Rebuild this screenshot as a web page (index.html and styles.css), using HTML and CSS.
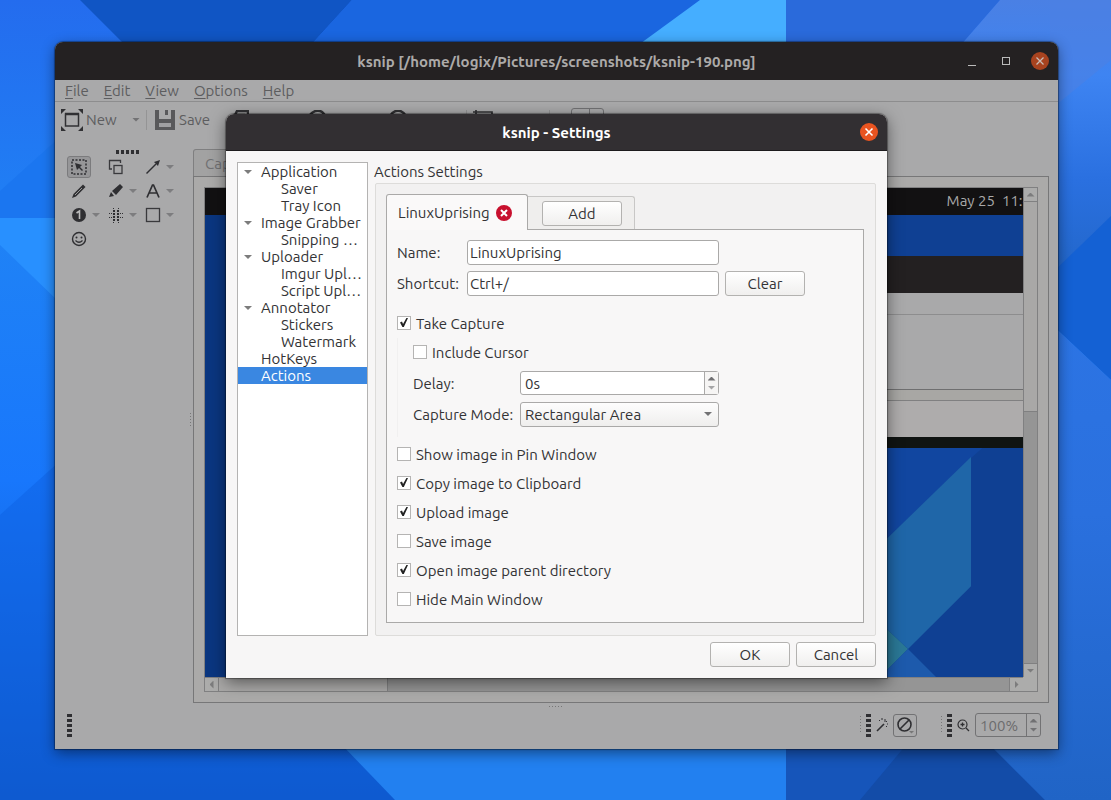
FILE: index.html
```html
<!DOCTYPE html>
<html lang="en">
<head>
    <meta charset="UTF-8">
    <meta name="viewport" content="width=device-width, initial-scale=1.0">
    <title>ksnip - Settings</title>
    <link rel="stylesheet" href="styles.css">
</head>
<body>

    <svg class="wallpaper" viewBox="0 0 1111 800" preserveAspectRatio="none" aria-hidden="true">
        <defs>
            <linearGradient id="left" x1="0" y1="0" x2="0" y2="1">
                <stop offset="0" stop-color="#246cee"/>
                <stop offset="0.3" stop-color="#1f82f6"/>
                <stop offset="0.6" stop-color="#1877fc"/>
                <stop offset="1" stop-color="#0e52bc"/>
            </linearGradient>
            <linearGradient id="right" x1="0" y1="0" x2="0" y2="1">
                <stop offset="0" stop-color="#4a80e4"/>
                <stop offset="0.25" stop-color="#3e84f2"/>
                <stop offset="0.6" stop-color="#2a70e0"/>
                <stop offset="1" stop-color="#2064c4"/>
            </linearGradient>
            <linearGradient id="right-low" x1="0" y1="0" x2="0" y2="1">
                <stop offset="0" stop-color="#2c74e4"/>
                <stop offset="0.4" stop-color="#2a70de"/>
                <stop offset="1" stop-color="#2064c6"/>
            </linearGradient>
        </defs>
        <rect width="1111" height="800" fill="url(#left)"/>
        <path d="M0 515L60 461H400V800H0z" fill="#0e62e4" fill-opacity=".5"/>
        <path d="M0 191L60 137V218H0z" fill="#1b76f0"/>
        <path d="M0 218H60V303L0 245z" fill="#2890ff"/>
        <path d="M80 0H352L310 46H126z" fill="#1055c4"/>
        <path d="M352 0H700L640 46H310z" fill="#1a66e0"/>
        <path d="M700 0H786V46H637z" fill="#45aeff"/>
        <path d="M786 0H1000L960 46H786z" fill="#2a6adb"/>
        <path d="M1000 0H1111V300H1040V46H960z" fill="url(#right)"/>
        <path d="M1111 60L1050 110V0H1111z" fill="#4c80e2" fill-opacity=".6"/>
        <path d="M1050 275L1111 216V380L1050 323z" fill="#1461d4"/>
        <path d="M342 745H786V800H395z" fill="#2280f0"/>
        <path d="M786 745H990L1045 800H786z" fill="#1655ba"/>
        <path d="M906 745H990L1045 800H860z" fill="#134ca8"/>
        <path d="M1050 323L1111 380V800H1045L990 745H1050z" fill="url(#right-low)"/>
    </svg>

    <div class="window">
        <header class="titlebar">
            <h1>ksnip [/home/logix/Pictures/screenshots/ksnip-190.png]</h1>
            <div class="window-buttons">
                <button class="wbtn" aria-label="Minimize"><svg width="10" height="10"><path d="M1 9.500h8" stroke="#bbb" stroke-width="1"/></svg></button>
                <button class="wbtn" aria-label="Maximize"><svg width="10" height="10"><rect x="1.500" y="1.500" width="7" height="7" fill="none" stroke="#bbb"/></svg></button>
                <button class="wbtn close" aria-label="Close window"><svg width="10" height="10"><path d="M1.500 1.500l7 7m0-7l-7 7" stroke="#c9bdb8" stroke-width="1.300"/></svg></button>
            </div>
        </header>

        <nav class="menubar">
            <a href="#"><u>F</u>ile</a>
            <a href="#"><u>E</u>dit</a>
            <a href="#"><u>V</u>iew</a>
            <a href="#"><u>O</u>ptions</a>
            <a href="#"><u>H</u>elp</a>
        </nav>

        <div class="toolbar">
            <button class="tool-new">
                <svg width="22" height="22"><rect x="4.500" y="5" width="13" height="12" fill="none" stroke="#303033" stroke-width="1.500"/><path d="M4 5h14" stroke="#303033" stroke-width="2.500"/><path d="M0 0h5L0 5zM22 0h-5l5 5zM0 22h5l-5-5zM22 22h-5l5-5z" fill="#303033"/></svg>
                New
            </button>
            <i class="arrow"></i>
            <i class="sep"></i>
            <button class="tool-save">
                <svg width="20" height="20"><path d="M0 0h4v9h12V0h4v20H0z" fill="#59595b"/><path d="M10 0h3v5h-3z" fill="#59595b"/><path d="M4 13h12v4H4z" fill="#a0a0a2"/></svg>
                Save
            </button>
            <button class="tool-icon" aria-label="Copy"><svg width="20" height="20"><path d="M6 5l2-4h11v14h-5M1 19V8l4-3h10v14z" fill="none" stroke="#303033" stroke-width="2.500"/></svg></button>
            <button class="tool-icon" aria-label="Undo"><svg width="20" height="20"><path d="M1 6C6-1 14-1 17 6v8" fill="none" stroke="#303033" stroke-width="2.500"/></svg></button>
            <button class="tool-icon" aria-label="Redo"><svg width="20" height="20"><path d="M19 6C15-1 7-1 3 6v8" fill="none" stroke="#303033" stroke-width="2.500"/></svg></button>
            <i class="sep"></i>
            <button class="tool-crop" aria-label="Crop"><svg width="20" height="20"><path d="M3 0v16h16M0 2h19v18" fill="none" stroke="#303033" stroke-width="1.700"/></svg></button>
            <i class="sep"></i>
            <i class="dot"></i>
            <i class="mini-spin"></i>
        </div>

        <div class="workspace">
            <aside class="tools">
                <i class="handle-h"></i>
                <div class="tool-grid">
                    <div class="tool"><button class="active" aria-label="Select"><svg width="16" height="16"><rect x="1" y="1" width="14" height="14" fill="none" stroke="#2f2f32" stroke-width="1.500" stroke-dasharray="2 1.500"/><path d="M4 4l7 2-2 2 3 3-1 1-3-3-2 2z" fill="#2f2f32"/></svg></button></div>
                    <div class="tool"><button aria-label="Duplicate"><svg width="16" height="16"><path d="M4 10H1.500V1.500h11V4" fill="none" stroke="#39393c" stroke-width="1.300"/><rect x="6" y="6.500" width="8" height="8" fill="none" stroke="#39393c" stroke-width="1.300"/></svg></button></div>
                    <div class="tool"><button aria-label="Arrow"><svg width="16" height="16"><path d="M1.500 14.500L11 5" stroke="#2f2f32" stroke-width="1.500"/><path d="M15 1l-2 6-4-4z" fill="#2f2f32"/></svg></button><i class="arrow"></i></div>
                    <div class="tool"><button aria-label="Pen"><svg width="16" height="16"><path d="M1 15l1.500-4L12 1.500l2.500 2.500L5 13.500z" fill="#2f2f32"/><path d="M4 12l7-7" stroke="#999" stroke-width="1"/></svg></button></div>
                    <div class="tool"><button aria-label="Marker"><svg width="16" height="16"><path d="M1 14l2-5 3 4zM4 8l8-7 3 3-7 8z" fill="#2f2f32"/></svg></button><i class="arrow"></i></div>
                    <div class="tool"><button aria-label="Text"><svg width="16" height="16"><path d="M2 14.500L7.500 2h1L14 14.500M4 10h8" fill="none" stroke="#2f2f32" stroke-width="1.700"/></svg></button><i class="arrow"></i></div>
                    <div class="tool"><button aria-label="Number"><svg width="16" height="16"><circle cx="8" cy="8" r="7" fill="#2f2f32"/><path d="M5.500 6L8.500 4v8" fill="none" stroke="#bbb" stroke-width="1.600"/></svg></button><i class="arrow"></i></div>
                    <div class="tool"><button aria-label="Blur"><svg width="16" height="16"><g fill="#2f2f32"><rect x="5" y="1" width="1" height="1"/><rect x="10" y="1" width="1" height="1"/><rect x="5" y="3" width="2" height="2"/><rect x="9" y="3" width="2" height="2"/><rect x="1" y="6" width="1" height="1"/><rect x="3" y="6" width="1" height="1"/><rect x="5" y="6" width="2" height="2"/><rect x="9" y="6" width="2" height="2"/><rect x="12" y="6" width="1" height="1"/><rect x="14" y="6" width="1" height="1"/><rect x="1" y="10" width="1" height="1"/><rect x="3" y="10" width="1" height="1"/><rect x="5" y="9" width="2" height="2"/><rect x="9" y="9" width="2" height="2"/><rect x="12" y="10" width="1" height="1"/><rect x="14" y="10" width="1" height="1"/><rect x="5" y="12" width="2" height="2"/><rect x="9" y="12" width="2" height="2"/><rect x="5" y="15" width="1" height="1"/><rect x="10" y="15" width="1" height="1"/></g></svg></button><i class="arrow"></i></div>
                    <div class="tool"><button aria-label="Rectangle"><svg width="16" height="16"><rect x="1.500" y="1.500" width="13" height="13" fill="none" stroke="#39393c" stroke-width="1.300"/></svg></button><i class="arrow"></i></div>
                    <div class="tool"><button aria-label="Sticker"><svg width="16" height="16"><circle cx="8" cy="8" r="6.500" fill="none" stroke="#2f2f32" stroke-width="1.400"/><circle cx="5.500" cy="6.500" r="1" fill="#2f2f32"/><circle cx="10.500" cy="6.500" r="1" fill="#2f2f32"/><path d="M4.500 9.500q3.500 3.500 7 0" fill="none" stroke="#2f2f32" stroke-width="1.200"/></svg></button></div>
                </div>
            </aside>
            <i class="splitter"></i>

            <main class="editor">
                <div class="editor-tab">Cap</div>
                <div class="page">
                    <div class="canvas">
                        <div class="shot">
                            <svg class="shot-bg" viewBox="0 0 818 491" preserveAspectRatio="none" aria-hidden="true">
                                <rect width="818" height="491" fill="#0f4093"/>
                                <path d="M0 0H30V491H0z" fill="#0a3680"/>
                                <path d="M766 271L682 352V250H790z" fill="#1146a0"/>
                                <path d="M766 270V400L703 463L682 443V352z" fill="#1f66a8"/>
                                <path d="M682 443L703 463L682 484z" fill="#2a7896"/>
                                <path d="M703 463L731 491H682V484z" fill="#1d5aac"/>
                            </svg>
                            <div class="shot-bar"><span>May 25</span><span>11:4</span></div>
                            <div class="shot-window">
                                <div class="shot-title"></div>
                                <div class="shot-menu"></div>
                                <div class="shot-body"></div>
                                <div class="shot-gap"></div>
                                <div class="shot-page"></div>
                                <div class="shot-strip"></div>
                            </div>
                        </div>
                        <div class="vscroll">
                            <span class="sbtn"><i class="tri up"></i></span>
                            <span class="thumb"></span>
                            <span class="sbtn"><i class="tri down"></i></span>
                        </div>
                        <div class="hscroll">
                            <span class="sbtn"><i class="tri left"></i></span>
                            <span class="thumb"></span>
                            <span class="sbtn"><i class="tri right"></i></span>
                        </div>
                        <div class="corner"></div>
                    </div>
                </div>
            </main>
        </div>

        <footer class="bottombar">
            <i class="handle-v"></i>
            <div class="bottom-group">
                <i class="dots"></i>
                <i class="handle-v"></i>
                <svg width="12" height="14"><path d="M1 13L8 6" stroke="#2f2f32" stroke-width="1.600"/><path d="M9 1v3M11 6h1M3 2l1 1M6 0v2M11 3l-1 1M10 8l1 1" stroke="#2f2f32"/></svg>
                <button class="effect" aria-label="Effect"><svg width="18" height="18"><circle cx="8.500" cy="8.500" r="6.500" fill="none" stroke="#2f2f32" stroke-width="1.600"/><path d="M4 13l9-9" stroke="#2f2f32" stroke-width="1.600"/><path d="M13 15h5l-2.500 2.500z" fill="#777"/></svg></button>
            </div>
            <div class="bottom-group">
                <i class="dots"></i>
                <i class="handle-v"></i>
                <svg width="13" height="13"><circle cx="5.500" cy="5.500" r="4.500" fill="none" stroke="#2f2f32" stroke-width="1.200"/><path d="M9 9l3 3M3.500 5.500h4M5.500 3.500v4" stroke="#2f2f32" stroke-width="1.300"/></svg>
                <div class="spin zoom">
                    <input type="text" value="100%" aria-label="Zoom">
                    <span class="spin-arrows"><i class="tri up"></i><i class="tri down"></i></span>
                </div>
            </div>
        </footer>
    </div>

    <div class="dialog" role="dialog" aria-labelledby="dialog-title">
        <header class="titlebar">
            <h2 id="dialog-title">ksnip - Settings</h2>
            <div class="window-buttons">
                <button class="wbtn close" aria-label="Close settings"><svg width="10" height="10"><path d="M1.500 1.500l7 7m0-7l-7 7" stroke="#fff" stroke-width="1.600"/></svg></button>
            </div>
        </header>

        <div class="dialog-body">
            <ul class="tree">
                <li class="open">Application
                    <ul>
                        <li>Saver</li>
                        <li>Tray Icon</li>
                    </ul>
                </li>
                <li class="open">Image Grabber
                    <ul>
                        <li>Snipping …</li>
                    </ul>
                </li>
                <li class="open">Uploader
                    <ul>
                        <li>Imgur Upl…</li>
                        <li>Script Upl…</li>
                    </ul>
                </li>
                <li class="open">Annotator
                    <ul>
                        <li>Stickers</li>
                        <li>Watermark</li>
                    </ul>
                </li>
                <li>HotKeys</li>
                <li class="selected">Actions</li>
            </ul>

            <section class="settings">
                <h3>Actions Settings</h3>
                <div class="group">
                    <div class="tabs">
                        <div class="tab current">
                            LinuxUprising
                            <button class="tab-close" aria-label="Remove action"><svg width="16" height="16"><circle cx="8" cy="8" r="8" fill="#c8102e"/><path d="M5 5l6 6m0-6l-6 6" stroke="#fff" stroke-width="2"/></svg></button>
                        </div>
                        <div class="tab">
                            <button class="btn">Add</button>
                        </div>
                    </div>
                    <form class="pane">
                        <div class="fields">
                            <label for="name">Name:</label>
                            <input class="text" type="text" id="name" value="LinuxUprising">
                            <label class="next" for="shortcut">Shortcut:</label>
                            <input class="text" type="text" id="shortcut" value="Ctrl+/">
                            <button type="button" class="btn">Clear</button>
                        </div>

                        <label class="check"><input type="checkbox" checked>Take Capture</label>
                        <div class="sub">
                            <label class="check"><input type="checkbox">Include Cursor</label>
                            <div class="sub-fields">
                                <label for="delay">Delay:</label>
                                <div class="spin">
                                    <input type="text" id="delay" value="0s">
                                    <span class="spin-arrows"><i class="tri up"></i><i class="tri down"></i></span>
                                </div>
                                <label for="mode">Capture Mode:</label>
                                <div class="combo">
                                    <select id="mode"><option>Rectangular Area</option></select>
                                    <i class="arrow"></i>
                                </div>
                            </div>
                        </div>
                        <label class="check"><input type="checkbox">Show image in Pin Window</label>
                        <label class="check"><input type="checkbox" checked>Copy image to Clipboard</label>
                        <label class="check"><input type="checkbox" checked>Upload image</label>
                        <label class="check"><input type="checkbox">Save image</label>
                        <label class="check"><input type="checkbox" checked>Open image parent directory</label>
                        <label class="check"><input type="checkbox">Hide Main Window</label>
                    </form>
                </div>
            </section>
        </div>

        <div class="dialog-buttons">
            <button class="btn">OK</button>
            <button class="btn">Cancel</button>
        </div>
    </div>

</body>
</html>
```
FILE: styles.css
```css
* {
    box-sizing: border-box;
}
body {
    margin: 0;
    height: 100vh;
    position: relative;
    overflow: hidden;
    font-family: Ubuntu, "Noto Sans", sans-serif;
    font-size: 15px;
    line-height: 17px;
    color: #333335;
}
button, input, select {
    font: inherit;
    color: inherit;
    margin: 0;
    padding: 0;
    border: none;
    background: none;
}
h1, h2, h3 {
    margin: 0;
    font-size: 15px;
}
svg {
    display: block;
    flex: none;
}
i {
    display: block;
    flex: none;
}
.wallpaper {
    position: absolute;
    width: 100%;
    height: 100%;
}

/* small triangles */
.arrow {
    width: 8px;
    height: 4px;
    background: #727274;
    clip-path: polygon(0 0, 100% 0, 50% 100%);
}
.tri {
    width: 8px;
    height: 4px;
    background: #707072;
}
.tri.up {
    clip-path: polygon(50% 0, 100% 100%, 0 100%);
}
.tri.down {
    clip-path: polygon(0 0, 100% 0, 50% 100%);
}
.tri.left, .tri.right {
    width: 4px;
    height: 8px;
}
.tri.left {
    clip-path: polygon(100% 0, 100% 100%, 0 50%);
}
.tri.right {
    clip-path: polygon(0 0, 100% 50%, 0 100%);
}

/* main window */
.window {
    position: absolute;
    top: 42px;
    right: 53px;
    bottom: 51px;
    left: 55px;
    display: flex;
    flex-direction: column;
    background: #a9a9aa;
    border-radius: 8px 8px 0 0;
    box-shadow: 0 0 1px 1px rgba(0,0,0,0.35), 0 4px 14px rgba(0,0,0,0.45);
    color: #5d5d5f;
}
.titlebar {
    position: relative;
    display: flex;
    align-items: center;
    justify-content: center;
    height: 38px;
    background: #242122;
    border-radius: 8px 8px 0 0;
    color: #acaaa9;
}
.window-buttons {
    position: absolute;
    right: 9px;
    display: flex;
    gap: 16px;
}
.wbtn {
    display: flex;
    align-items: center;
    justify-content: center;
    width: 18px;
    height: 18px;
    border-radius: 50%;
}
.wbtn.close {
    background: #a8431f;
}
.menubar {
    display: flex;
    gap: 15px;
    height: 22px;
    padding: 2px 10px;
    border-bottom: 1px solid #8d8d8e;
}
.menubar a {
    color: inherit;
    text-decoration: none;
}
.menubar u {
    text-underline-offset: 2px;
}
.toolbar {
    display: flex;
    align-items: center;
    height: 35px;
    padding-left: 6px;
}
.toolbar button {
    display: flex;
    align-items: center;
    gap: 4px;
}
.toolbar .tool-new {
    width: 71px;
    gap: 3px;
}
.toolbar .tool-save {
    width: 74px;
    margin-left: 8px;
}
.toolbar .tool-icon {
    width: 79px;
}
.sep {
    width: 1px;
    height: 20px;
    margin-left: 6px;
    background: #949495;
}
.tool-icon + .sep {
    margin-left: 0;
}
.tool-crop {
    width: 70px;
    margin-left: 6px;
}
.dot {
    width: 7px;
    height: 12px;
    margin-left: 6px;
    border-radius: 50%;
    background: #303033;
}
.mini-spin {
    width: 33px;
    height: 24px;
    margin-left: 8px;
    border: 1px solid #727274;
    border-radius: 3px;
    background: linear-gradient(90deg, transparent 17px, #727274 17px 18px, transparent 18px);
}
.workspace {
    flex: 1;
    display: flex;
    min-height: 0;
}
.tools {
    width: 135px;
    padding: 13px 0 0 12px;
}
.handle-h {
    width: 23px;
    height: 4px;
    margin-left: 49px;
    background: repeating-linear-gradient(90deg, #2f2f32 0 3px, transparent 3px 5px);
}
.tool-grid {
    display: grid;
    grid-template-columns: repeat(3, 37px);
    grid-auto-rows: 24px;
    margin-top: 1px;
}
.tool {
    display: flex;
    align-items: center;
    gap: 1px;
}
.tool .arrow {
    background: #7d7d7f;
}
.tool button {
    display: flex;
    align-items: center;
    justify-content: center;
    width: 24px;
    height: 22px;
}
.tool .active {
    border: 1px solid #7b7b7d;
    border-radius: 3px;
    background: #969698;
}
.splitter {
    align-self: center;
    width: 1px;
    height: 15px;
    margin-right: 2px;
    background: repeating-linear-gradient(#777 0 1px, transparent 1px 3px);
}
.editor {
    flex: 1;
    display: flex;
    flex-direction: column;
    min-width: 0;
    padding: 12px 9px 0 0;
}
.editor-tab {
    width: 120px;
    height: 27px;
    padding: 5px 11px;
    border: 1px solid #7f7f80;
    border-bottom: none;
    border-radius: 3px 3px 0 0;
    background: #a2a2a2;
    color: #717173;
}
.page {
    flex: 1;
    display: flex;
    min-height: 0;
    padding: 10px;
    border: 1px solid #777778;
    background: #abaaa9;
}
.canvas {
    flex: 1;
    display: grid;
    grid-template: 1fr 14px / 1fr 14px;
    min-width: 0;
    border: 1px solid #808081;
}
.shot {
    position: relative;
    display: flex;
    flex-direction: column;
    min-width: 0;
    overflow: hidden;
}
.shot-bg {
    position: absolute;
    width: 100%;
    height: 100%;
}
.shot-bar {
    position: relative;
    display: flex;
    justify-content: flex-end;
    gap: 7px;
    height: 27px;
    padding: 4px 0;
    margin-right: -8px;
    background: #121112;
    color: #a9a9a9;
}
.shot-window {
    position: relative;
    margin: 41px 0 0 60px;
}
.shot-title {
    height: 37px;
    background: #232021;
}
.shot-menu {
    height: 22px;
    background: #a9a9aa;
    border-bottom: 1px solid #8d8d8e;
}
.shot-body {
    height: 75px;
    background: #a9a9aa;
    border-bottom: 1px solid #6f6f70;
}
.shot-gap {
    height: 11px;
    background: #a8a7a4;
    border-bottom: 1px solid #808081;
}
.shot-page {
    height: 36px;
    background: #aeacac;
}
.shot-strip {
    height: 11px;
    background: #101412;
}
.vscroll, .hscroll {
    display: flex;
    background: #959595;
}
.vscroll {
    flex-direction: column;
    justify-content: space-between;
    border-left: 1px solid #808081;
}
.hscroll {
    justify-content: space-between;
    border-top: 1px solid #808081;
}
.sbtn {
    display: flex;
    align-items: center;
    justify-content: center;
    flex: none;
    background: #acacab;
}
.vscroll .sbtn {
    height: 13px;
}
.hscroll .sbtn {
    width: 13px;
}
.thumb {
    background: #a9a8a7;
    border: 0 solid #808081;
}
.vscroll .thumb {
    height: 211px;
    border-width: 1px 0;
    margin-bottom: auto;
}
.hscroll .thumb {
    width: 170px;
    border-width: 0 1px;
    margin-right: auto;
}
.sbtn:last-child {
    outline: 1px solid #808081;
}
.sbtn .tri {
    background: #7c7c7d;
}
.corner {
    background: #acacab;
}
.bottombar {
    display: flex;
    align-items: center;
    gap: 24px;
    height: 46px;
    padding: 0 17px 2px 12px;
    background: repeating-linear-gradient(90deg, #777 0 1px, transparent 1px 3px) center 3px / 15px 1px no-repeat;
}
.bottombar > .handle-v {
    margin-right: auto;
}
.bottom-group {
    display: flex;
    align-items: center;
    gap: 5px;
}
.handle-v {
    width: 5px;
    height: 23px;
    background: repeating-linear-gradient(#2f2f32 0 3px, transparent 3px 5px);
}
.dots {
    width: 1px;
    height: 18px;
    background: repeating-linear-gradient(#777 0 1px, transparent 1px 3px);
}
.effect {
    display: flex;
    align-items: center;
    justify-content: center;
    width: 24px;
    height: 23px;
    border: 1px solid #727274;
    border-radius: 3px;
}

/* spin boxes */
.spin {
    display: flex;
    height: 24px;
    border: 1px solid #aaa9a8;
    border-radius: 3px;
    background: #fff;
}
.spin input {
    flex: 1;
    min-width: 0;
    padding: 1px 0 0 4px;
}
.spin-arrows {
    display: flex;
    flex-direction: column;
    align-items: center;
    justify-content: center;
    gap: 5px;
    width: 14px;
    border-left: 1px solid #aaa9a8;
    background: #f6f5f4;
}
.spin-arrows .down {
    background: #a5a5a6;
}
.zoom {
    width: 66px;
    background: none;
    border-color: #727274;
    color: #6c6c6e;
}
.zoom .spin-arrows {
    background: none;
    border-color: #727274;
}
.zoom .down {
    background: #727274;
}

/* settings dialog */
.dialog {
    position: absolute;
    top: 114px;
    left: 226px;
    width: 661px;
    background: #f7f6f6;
    border-radius: 8px 8px 0 0;
    box-shadow: 0 0 1px 1px rgba(0,0,0,0.35), 0 4px 16px rgba(0,0,0,0.5);
}
.dialog .titlebar {
    height: 37px;
    background: #322f32;
    border-bottom: 1px solid #1d1b1d;
    color: #fff;
}
.dialog .close {
    background: #e95420;
}
.dialog-body {
    display: flex;
    gap: 6px;
    padding: 11px 11px 6px;
}
.tree {
    width: 131px;
    margin: 0;
    padding: 0;
    border: 1px solid #b4b3b2;
    background: #fff;
    list-style: none;
}
.tree ul {
    margin: 0;
    padding: 0 0 0 20px;
    list-style: none;
}
.tree li {
    position: relative;
    white-space: nowrap;
}
.tree > li {
    padding-left: 23px;
}
.tree .open::before {
    content: "";
    position: absolute;
    top: 7px;
    left: 6px;
    width: 8px;
    height: 4px;
    background: #7c7c7c;
    clip-path: polygon(0 0, 100% 0, 50% 100%);
}
.tree .selected {
    background: #3a87e1;
    color: #fff;
}
.settings {
    flex: 1;
    display: flex;
    flex-direction: column;
}
h3 {
    height: 21px;
    padding-top: 1px;
    font-weight: normal;
}
.group {
    flex: 1;
    margin-left: 1px;
    padding: 10px 11px 12px 10px;
    border: 1px solid #dddcda;
    border-radius: 2px;
    background: #f2f1f1;
}
.tabs {
    display: flex;
    align-items: flex-end;
}
.tab {
    height: 33px;
    padding: 4px 12px 4px 14px;
    border: 1px solid #c8c7c6;
    border-width: 1px 1px 0 0;
    border-radius: 0 3px 0 0;
    background: #efeeed;
}
.tab.current {
    position: relative;
    display: flex;
    align-items: center;
    justify-content: space-between;
    width: 142px;
    height: 36px;
    margin-bottom: -1px;
    padding: 0 15px 0 11px;
    border: 1px solid #aaa9a8;
    border-bottom: none;
    border-radius: 3px 3px 0 0;
    background: #faf9f9;
}
.tab-close {
    width: 16px;
    height: 16px;
}
.pane {
    padding: 10px 10px 8px;
    border: 1px solid #aaa9a8;
    background: #f8f7f7;
}
.fields {
    display: grid;
    grid-template-columns: 64px 252px 80px;
    gap: 6px;
    align-items: center;
    margin-bottom: 13px;
}
.fields .next {
    grid-column: 1;
}
.text {
    height: 25px;
    padding: 0 2px;
    border: 1px solid #aaa9a8;
    border-radius: 3px;
    background: #fff;
}
.btn {
    width: 80px;
    height: 25px;
    border: 1px solid #b3b2b0;
    border-radius: 3px;
    background: linear-gradient(#fff, #f0efee);
}
.check {
    display: flex;
    align-items: center;
    gap: 5px;
    width: max-content;
    height: 29px;
}
.check input {
    appearance: none;
    width: 14px;
    height: 14px;
    border: 1px solid #b5b4b3;
    background: #fff;
    margin-bottom: 1px;
}
.check input:checked::before {
    content: "";
    display: block;
    width: 8px;
    height: 9px;
    margin: 1px 2px;
    background: #222;
    clip-path: polygon(0 50%, 25% 40%, 38% 68%, 80% 0, 100% 0, 48% 100%, 30% 100%);
}
.sub {
    padding: 0 0 10px 15px;
    border-left: 1px solid #f1f0f0;
    margin-bottom: 3px;
}
.sub-fields {
    display: grid;
    grid-template-columns: 101px 199px;
    gap: 7px 6px;
    align-items: center;
    padding-top: 4px;
}
.combo {
    position: relative;
}
.combo select {
    appearance: none;
    display: block;
    width: 100%;
    height: 25px;
    padding-left: 4px;
    border: 1px solid #aaa9a8;
    border-radius: 3px;
    background: linear-gradient(#fdfdfd, #efeeed);
}
.combo .arrow {
    position: absolute;
    top: 10px;
    right: 7px;
}
.dialog-buttons {
    display: flex;
    justify-content: flex-end;
    gap: 6px;
    padding: 0 11px 11px;
}
```
